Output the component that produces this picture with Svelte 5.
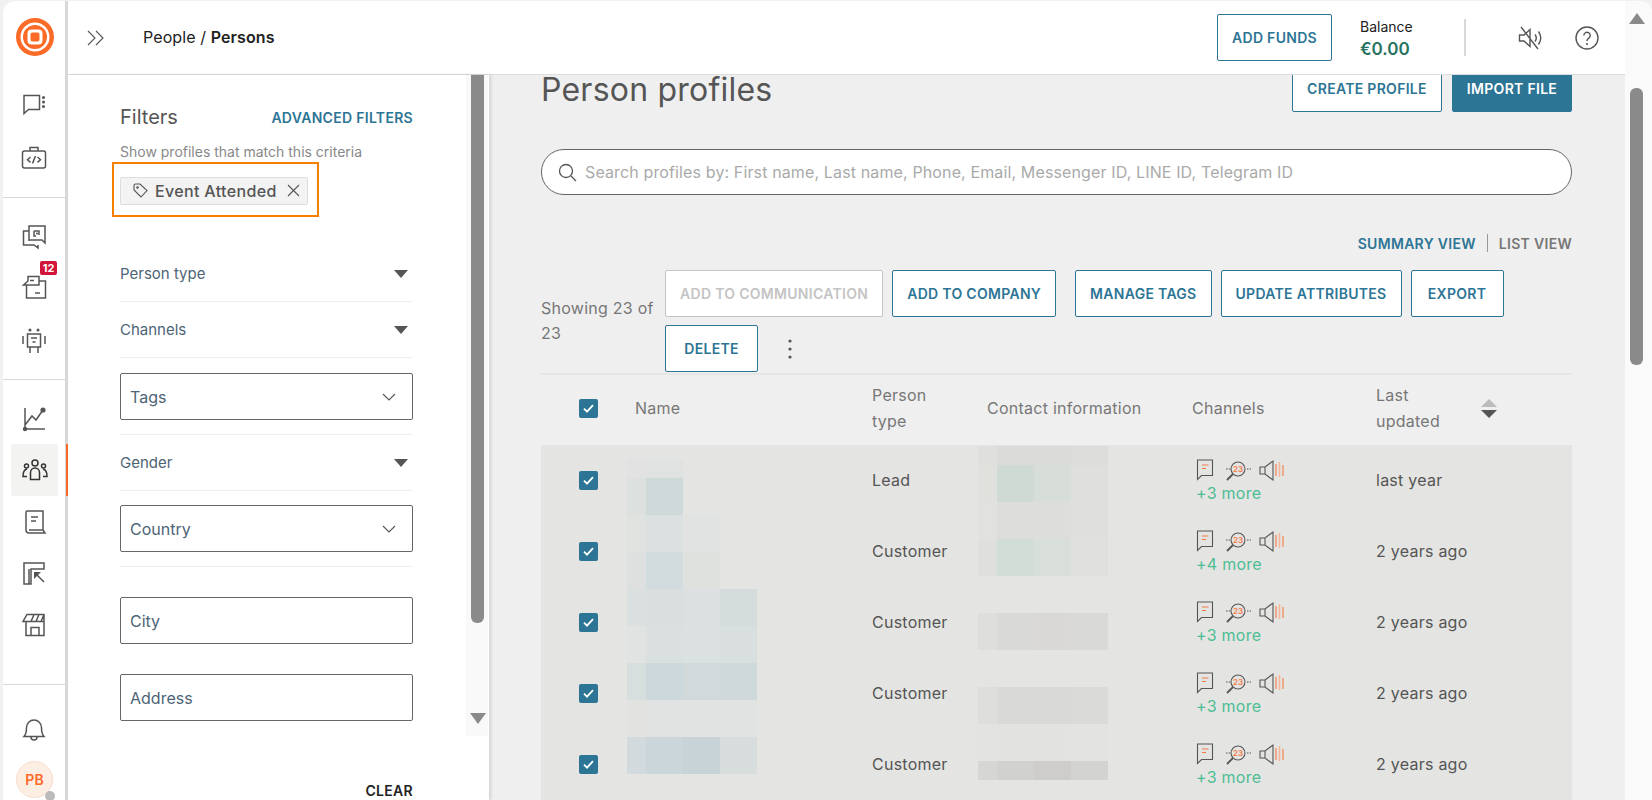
<script>
  const rows = [
    { type: 'Lead', more: 3, updated: 'last year' },
    { type: 'Customer', more: 4, updated: '2 years ago' },
    { type: 'Customer', more: 3, updated: '2 years ago' },
    { type: 'Customer', more: 3, updated: '2 years ago' },
    { type: 'Customer', more: 3, updated: '2 years ago' }
  ]

  const actions = ['ADD TO COMPANY', 'MANAGE TAGS', 'UPDATE ATTRIBUTES', 'EXPORT', 'DELETE']

  // redacted cells in the reference: column edges, then row top/height and fills
  const nameCols = [0, 19, 56, 93, 130]
  const nameBlocks = [
    [0, 19, ['#e1e2e1', '#dfe2e1']],
    [19, 37, ['#dce0df', '#cfd9da']],
    [56, 37, ['#dfe2de', '#dbe0e0', '#e0e3e2']],
    [93, 37, ['#dde0df', '#d2dbdd', '#dfe1df']],
    [130, 37, ['#dadfdf', '#d8dfde', '#dce0e0', '#d5dcdc']],
    [167, 37, ['#e0e3e2', '#dae0e0', '#dbe0e0', '#d9dfdf']],
    [204, 37, ['#d6dede', '#ccd8db', '#d2d9db', '#cfd8da']],
    [241, 37, ['#e2e3e1', '#e0e3e2', '#e0e3e2', '#e0e3e2']],
    [278, 37, ['#d3dadd', '#cbd6da', '#c7d3d6', '#d6dddc']]
  ]
  const contactBlocks = [
    [0, 19, ['#dfdfdd', '#dbdbd9', '#dbdbd9', '#dcdcda']],
    [19, 37, ['#e0e1dc', '#d0dad5', '#d7ddd9', '#dfdfdd']],
    [56, 37, ['#e1e1df', '#dddddb', '#dddddb', '#dfdfdd']],
    [93, 37, ['#dfdfdd', '#d3ddd8', '#d8ded9', '#e0e0de']],
    [167, 37, ['#dededc', '#d9d9d7', '#d9d8d6', '#d9d9d7']],
    [241, 37, ['#dededc', '#d9d9d7', '#d9d9d7', '#dadad8']],
    [278, 37, ['#e3e3e1', '#e2e2e0', '#e2e2e0', '#e3e3e1']],
    [315, 19, ['#d6d6d4', '#d1d1cf', '#cecdcb', '#d3d3d1']]
  ]
</script>

{#snippet check()}
  <span class="check">
    <svg width="11" height="9" viewBox="0 0 11 9"><path d="M1 4.6l3 3 6-6.4" fill="none" stroke="#fff" stroke-width="1.8"/></svg>
  </span>
{/snippet}

{#snippet mosaic(cls, blocks)}
  <svg class="mosaic {cls}" width="130" height="355" viewBox="0 0 130 355">
    {#each blocks as [y, h, fills]}
      {#each fills as fill, i}
        <rect x={nameCols[i]} {y} width={nameCols[i + 1] - nameCols[i]} height={h} {fill} />
      {/each}
    {/each}
  </svg>
{/snippet}

<div class="shell">
  <nav class="rail">
    <div class="group first">
      <svg class="logo" width="38" height="38" viewBox="0 0 38 38">
        <circle cx="19" cy="19" r="19" fill="#fb6a26"/>
        <circle cx="19" cy="19" r="14.5" fill="#fff"/>
        <circle cx="19" cy="19" r="12" fill="#fb6a26"/>
        <rect x="11.5" y="11.5" width="15" height="15" rx="4" fill="#fff"/>
        <rect x="14.5" y="14.5" width="9" height="9" rx="2" fill="#fb6a26"/>
      </svg>
      <div class="nav-item">
        <svg viewBox="0 0 30 30"><path d="M5 6.5h15.5v14H9.5L5 24.5z"/><g class="solid"><circle cx="24.5" cy="8.5" r="1.5"/><circle cx="24.5" cy="13" r="1.5"/><circle cx="24.5" cy="17.5" r="1.5"/></g></svg>
      </div>
      <div class="nav-item">
        <svg viewBox="0 -1 30 30"><rect x="3.5" y="9" width="23" height="17" rx="2"/><path d="M11 9V5.5h8V9M11.5 15l-3 2.7 3 2.7M18.5 15l3 2.7-3 2.7M16.5 14l-3 7.4"/></svg>
      </div>
    </div>
    <div class="group second">
      <div class="nav-item">
        <svg viewBox="0 0 30 30"><path d="M10 10H4.5V24H15l4 3v-3M10 20V5h16v17l-3-3H10M15 10h5v4M15 10v5h2"/><circle class="solid" cx="18" cy="12.5" r="1.1"/></svg>
      </div>
      <div class="nav-item">
        <svg viewBox="0 0 30 30"><path d="M9 3.5h11V12H4.500L9 8zM7.500 12v13h19V8H20M11 7.500h4M16 20h5"/></svg>
        <span class="badge">12</span>
      </div>
      <div class="nav-item">
        <svg viewBox="0 0 30 30"><rect x="8.5" y="9" width="13" height="13"/><g class="solid"><circle cx="11" cy="5" r="1.5"/><circle cx="19" cy="5" r="1.5"/></g><path d="M4 11v8M26 11v8M11 22v6M19 22v6M12 13h6M13.5 17h3"/></svg>
      </div>
    </div>
    <div class="group third">
      <div class="nav-item">
        <svg viewBox="0 0 30 30"><path d="M6 5v21h20M6 22l7-9 4 4 7-10"/><g class="solid"><circle cx="6" cy="26" r="2.2"/><circle cx="24" cy="7" r="2.6"/></g></svg>
      </div>
      <div class="nav-item active">
        <svg viewBox="0 0 30 30"><circle cx="15" cy="8" r="3"/><path d="M10.5 24.5v-7a4.5 4.5 0 0 1 9 0v7zM7 14c-3 .5-4 3-4 7.5h4M23 14c3 .5 4 3 4 7.500h-4"/><circle cx="6.5" cy="11" r="2"/><circle cx="23.5" cy="11" r="2"/></svg>
      </div>
      <div class="nav-item">
        <svg viewBox="0 1 30 30"><path d="M7 24V6a1 1 0 0 1 1-1h16v19M7 24a3 3 0 0 0 3 3h16l-2-3H10M12 11h7M12 15h5"/></svg>
      </div>
      <div class="nav-item">
        <svg viewBox="0 1 30 30"><path d="M5 5h20v6H12v15H5zM10 11v15M16 15l9 9"/><path class="solid" d="M15 14h7l-7 7z"/></svg>
      </div>
      <div class="nav-item">
        <svg viewBox="0 1.5 30 30"><path d="M8 5h17v7H4zM7 12v14h18V5M12 26v-8h8v8M12 12l3-7M17 12l3-7M22 12l3-7"/></svg>
      </div>
    </div>
    <div class="group last">
      <div class="nav-item">
        <svg viewBox="0 0 30 30"><path d="M5 22.5c2-2 2.500-4 2.500-9a7.500 7.500 0 0 1 15 0c0 5 .5 7 2.500 9zM12 23a3 3 0 0 0 6 0"/></svg>
      </div>
      <div class="avatar">PB<span class="status"></span></div>
    </div>
  </nav>

  <div class="content">
    <header class="topbar">
      <svg class="expand" width="18" height="16" viewBox="0 0 18 16"><path d="M1 1l7 7-7 7M9 1l7 7-7 7" fill="none" stroke="#555" stroke-width="1.1"/></svg>
      <div class="crumb">People / <b>Persons</b></div>
      <button class="btn funds">ADD FUNDS</button>
      <div class="balance">
        <div>Balance</div>
        <div class="amount">€0.00</div>
      </div>
      <span class="top-sep"></span>
      <svg class="mute" width="26" height="26" viewBox="0 0 26 26" fill="none" stroke="#555" stroke-width="1.4"><path d="M1.5 10v6H6l6 5.500V4.500L6 10zM17 9.500c1.500 2 1.500 5 0 7M20.500 6.500c2.800 4 2.800 9 0 13M3 2l17 22"/></svg>
      <svg class="help" width="24" height="24" viewBox="0 0 24 24" fill="none" stroke="#555" stroke-width="1.4"><circle cx="12" cy="12" r="11"/><path d="M8.800 9.500a3.200 3.200 0 1 1 5 2.600c-1.200.8-1.800 1.400-1.800 2.900"/><circle cx="12" cy="18" r="1" fill="#555" stroke="none"/></svg>
    </header>

    <div class="below">
      <aside class="panel">
        <div class="filters">
          <div class="filters-head">
            <span class="filters-title">Filters</span>
            <span class="advanced">ADVANCED FILTERS</span>
          </div>
          <div class="hint">Show profiles that match this criteria</div>
          <div class="highlight">
            <span class="chip">
              <svg width="15" height="15" viewBox="0 0 15 15" fill="none" stroke="#555" stroke-width="1.1"><path d="M1 2.500A1.500 1.500 0 0 1 2.500 1H7l7 6.500L8 14 1 7z"/><circle cx="4.5" cy="4.5" r=".8"/></svg>
              Event Attended
              <svg class="chip-x" width="13" height="13" viewBox="0 0 13 13" stroke="#555" stroke-width="1.1"><path d="M1 1l11 11M12 1L1 12"/></svg>
            </span>
          </div>

          <div class="acc first-acc">Person type<span class="caret"></span></div>
          <div class="acc">Channels<span class="caret"></span></div>
          <div class="sel-row"><div class="field">Tags<svg width="14" height="8" viewBox="0 0 14 8" fill="none" stroke="#555" stroke-width="1.1"><path d="M1 1l6 6 6-6"/></svg></div></div>
          <div class="acc">Gender<span class="caret"></span></div>
          <div class="sel-row country"><div class="field">Country<svg width="14" height="8" viewBox="0 0 14 8" fill="none" stroke="#555" stroke-width="1.1"><path d="M1 1l6 6 6-6"/></svg></div></div>
          <div class="field city">City</div>
          <div class="field address">Address</div>
          <div class="clear">CLEAR</div>
        </div>
        <div class="panel-scroll">
          <div class="panel-thumb"></div>
          <span class="arrow-down"></span>
        </div>
      </aside>

      <main class="main">
        <div class="scrolled">
          <div class="page-head">
            <h1>Person profiles</h1>
            <div class="head-actions">
              <button class="btn">CREATE PROFILE</button>
              <button class="btn primary">IMPORT FILE</button>
            </div>
          </div>

          <div class="search">
            <svg width="19" height="19" viewBox="0 0 19 19" fill="none" stroke="#555" stroke-width="1.3"><circle cx="8" cy="8" r="6.5"/><path d="M13 13l5 5"/></svg>
            Search profiles by: First name, Last name, Phone, Email, Messenger ID, LINE ID, Telegram ID
          </div>

          <div class="views">
            <span class="view-on">SUMMARY VIEW</span>
            <span class="view-sep"></span>
            <span class="view-off">LIST VIEW</span>
          </div>

          <div class="toolbar">
            <div class="showing">Showing 23 of 23</div>
            <div class="tool-btns">
              <button class="btn disabled">ADD TO COMMUNICATION</button>
              {#each actions as label}
                <button class="btn" class:spaced={label === 'MANAGE TAGS'}>{label}</button>
              {/each}
              <svg class="kebab" width="4" height="20" viewBox="0 0 4 20" fill="#555"><circle cx="2" cy="2" r="1.6"/><circle cx="2" cy="10" r="1.6"/><circle cx="2" cy="18" r="1.6"/></svg>
            </div>
          </div>

          <div class="grid thead">
            <div class="c-check">{@render check()}</div>
            <div>Name</div>
            <div>Person type</div>
            <div>Contact information</div>
            <div>Channels</div>
            <div class="sorted">
              <span>Last updated</span>
              <span class="sort"><i class="up"></i><i class="down"></i></span>
            </div>
          </div>

          <div class="tbody">
            {#each rows as row}
              <div class="grid row">
                <div class="c-check">{@render check()}</div>
                <div></div>
                <div>{row.type}</div>
                <div></div>
                <div class="channels">
                  <div class="chan-icons">
                    <svg width="92" height="22" viewBox="0 0 92 22" fill="none" stroke="#555" stroke-width="1.1">
                      <path d="M1.500 1h15v15.500H5.500L1.500 20.500z"/>
                      <path d="M6 6h6.500M6 9.500h4" stroke="#f47a45"/>
                      <circle cx="42" cy="10" r="7"/>
                      <path d="M37 15l-6 6" stroke-width="1.8"/>
                      <path d="M30 10h4M51 10h4" stroke-dasharray="1.5 1.2"/>
                      <text x="42" y="12.800" text-anchor="middle" class="tiny">23</text>
                      <path d="M64 8h5l8-6v19l-8-6h-5zM69 8v7"/>
                      <path d="M80 5v12M87 6v11" stroke="#f47a45"/>
                      <path d="M83.500 3v15" stroke="#f9b493" stroke-width="1.5"/>
                    </svg>
                  </div>
                  <div class="more">+{row.more} more</div>
                </div>
                <div>{row.updated}</div>
              </div>
            {/each}
            {@render mosaic('m-name', nameBlocks)}
            {@render mosaic('m-contact', contactBlocks)}
          </div>
        </div>
      </main>
    </div>
  </div>

  <div class="page-scroll">
    <span class="arrow-up"></span>
    <div class="page-thumb"></div>
  </div>
</div>

<style>
  :global(body) {
    margin: 0;
    background: #f1f1f1;
    font-family: Inter, "Liberation Sans", sans-serif;
    overflow: hidden;
  }

  .shell {
    display: flex;
    height: 799px;
    width: 1649px;
    margin: 1px 0 0 3px;
    background: #fff;
    border-radius: 12px 12px 0 0;
    overflow: hidden;
  }

  /* left rail */
  .rail {
    flex: 0 0 62px;
    height: 799px;
    border-right: 3px solid #d8d8d8;
    display: flex;
    flex-direction: column;
  }
  .group {
    border-bottom: 1px solid #d8d8d8;
    box-sizing: border-box;
  }
  .group.first { height: 197px; padding-top: 17px; }
  .group.second { height: 182px; padding-top: 12px; }
  .group.third { height: 305px; padding-top: 12px; }
  .group.last { border: 0; padding-top: 18px; }
  .logo { display: block; margin: 0 auto 22px 13px; }
  .nav-item {
    position: relative;
    height: 52px;
    display: flex;
    align-items: center;
    justify-content: center;
    margin-left: -1px;
  }
  .nav-item svg {
    width: 30px;
    height: 30px;
    fill: none;
    stroke: #555;
    stroke-width: 1.5;
  }
  .nav-item .solid { fill: #555; stroke: none; }
  .nav-item.active {
    background: #f3f3f2;
    width: 47px;
    margin-left: 8px;
    border-radius: 2px;
  }
  .nav-item.active svg { stroke: #333; }
  .nav-item.active::after {
    content: '';
    position: absolute;
    left: 55px;
    top: 0;
    bottom: 0;
    width: 3px;
    background: #fb6a26;
  }
  .badge {
    position: absolute;
    top: -1px;
    left: 38px;
    width: 17px;
    height: 14px;
    background: #d0143a;
    border-radius: 2px;
    color: #fff;
    font-size: 11px;
    font-weight: 700;
    line-height: 14px;
    text-align: center;
  }
  .avatar {
    position: relative;
    box-sizing: border-box;
    width: 37px;
    height: 37px;
    margin: 6px 0 0 13px;
    border-radius: 50%;
    background: #fdeee4;
    border: 1px solid #f8dccb;
    color: #fb6a26;
    font-size: 14px;
    font-weight: 600;
    line-height: 35px;
    text-align: center;
  }
  .status {
    position: absolute;
    right: -3px;
    bottom: -4px;
    width: 10px;
    height: 10px;
    border-radius: 50%;
    background: #bbb;
  }

  .content {
    flex: 0 0 1557px;
    display: flex;
    flex-direction: column;
    min-width: 0;
  }

  /* top bar */
  .topbar {
    flex: 0 0 73px;
    display: flex;
    align-items: center;
    border-bottom: 1px solid #ddd;
    padding: 0 26px 0 19px;
    background: #fff;
    color: #222;
    font-size: 16px;
  }
  .crumb { margin: 0 0 2px 38px; letter-spacing: .1px; }
  .crumb b { font-weight: 600; }
  .btn {
    box-sizing: border-box;
    height: 47px;
    min-width: 93px;
    padding: 0 14px;
    background: #fff;
    border: 1px solid #2d7595;
    border-radius: 2px;
    color: #2d7595;
    font-family: inherit;
    font-size: 14px;
    font-weight: 600;
    letter-spacing: .3px;
    white-space: nowrap;
  }
  .btn.primary { background: #2d7595; color: #fff; }
  .btn.disabled { border-color: #c4c4c4; color: #c4c4c4; }
  .btn.spaced { margin-left: 10px; }
  .funds { margin-left: auto; width: 115px; padding: 0; }
  .balance {
    width: 104px;
    margin-left: 28px;
    margin-top: 3px;
    font-size: 14px;
    line-height: 20px;
  }
  .amount {
    color: #27735f;
    font-size: 17px;
    font-weight: 600;
    line-height: 24px;
  }
  .top-sep { width: 2px; height: 37px; background: #d8d8d8; }
  .mute { margin-left: 52px; }
  .help { margin-left: 31px; }

  .below {
    flex: 1;
    display: flex;
    min-height: 0;
    background: #efefef;
  }

  /* filters */
  .panel {
    flex: 0 0 421px;
    display: flex;
    background: #fff;
    box-shadow: 2px 0 3px rgba(0, 0, 0, .12);
    z-index: 1;
    overflow: hidden;
  }
  .filters {
    width: 293px;
    padding: 30px 53px 0 52px;
    color: #4d6476;
    font-size: 15px;
  }
  .filters-head {
    display: flex;
    justify-content: space-between;
    align-items: center;
    height: 24px;
  }
  .filters-title { color: #555; font-size: 20px; }
  .advanced { color: #2d7595; font-size: 14px; font-weight: 600; letter-spacing: .3px; }
  .hint { margin-top: 14px; color: #888; font-size: 14px; line-height: 18px; }
  .highlight {
    box-sizing: border-box;
    display: inline-flex;
    align-items: center;
    height: 55px;
    margin: 1px 0 0 -8px;
    padding: 2px 9px 0 6px;
    border: 2px solid #f77f00;
    vertical-align: top;
  }
  .chip {
    box-sizing: border-box;
    display: flex;
    align-items: center;
    height: 28px;
    padding: 0 7px 0 12px;
    background: #f3f3f3;
    border: 1px solid #ddd;
    border-radius: 2px;
    color: #555;
    font-size: 16px;
    font-weight: 500;
    gap: 7px;
    letter-spacing: .35px;
  }
  .chip-x { margin-left: 3px; }
  .acc {
    display: flex;
    justify-content: space-between;
    align-items: center;
    height: 55px;
    border-bottom: 1px solid #eee;
  }
  .first-acc { margin-top: 29px; }
  .caret {
    width: 0;
    height: 0;
    margin-right: 5px;
    border: 7px solid transparent;
    border-top: 8px solid #555;
    border-bottom: 0;
  }
  .sel-row { padding: 15px 0 14px; border-bottom: 1px solid #eee; }
  .sel-row.country { padding-top: 14px; }
  .field {
    box-sizing: border-box;
    display: flex;
    justify-content: space-between;
    align-items: center;
    height: 47px;
    padding: 0 16px 0 9px;
    border: 1px solid #666;
    border-radius: 2px;
    font-size: 16px;
  }
  .city { margin-top: 30px; }
  .address { margin-top: 30px; }
  .clear {
    margin-top: 62px;
    color: #222;
    font-size: 14px;
    font-weight: 600;
    line-height: 16px;
    letter-spacing: .3px;
    text-align: right;
  }
  .panel-scroll {
    position: relative;
    width: 22px;
    height: 661px;
    background: #f9f9f9;
  }
  .panel-thumb {
    width: 13px;
    height: 548px;
    margin-left: 5px;
    background: #8a8a8a;
    border-radius: 0 0 6px 6px;
  }
  .arrow-down {
    position: absolute;
    left: 4px;
    top: 638px;
    width: 0;
    height: 0;
    border: 8px solid transparent;
    border-top: 11px solid #8a8a8a;
    border-bottom: 0;
  }

  /* main */
  .main {
    flex: 1;
    min-width: 0;
    overflow: hidden;
    background: #efefef;
  }
  .scrolled {
    margin-top: -10px;
    padding: 0 53px 0 52px;
  }
  .page-head {
    display: flex;
    justify-content: space-between;
    align-items: center;
    height: 47px;
  }
  h1 {
    margin: 3px 0 0;
    color: #555;
    font-size: 32px;
    line-height: 28px;
    font-weight: 400;
    letter-spacing: .22px;
  }
  .head-actions { display: flex; gap: 10px; }
  .head-actions .btn { width: 150px; padding: 0; }
  .head-actions .primary { width: 120px; }
  .search {
    box-sizing: border-box;
    display: flex;
    align-items: center;
    gap: 8px;
    height: 46px;
    margin-top: 37px;
    padding-left: 16px;
    border: 1px solid #666;
    border-radius: 23px;
    background: #fff;
    color: #aaa;
    font-size: 16px;
    letter-spacing: .13px;
  }
  .views {
    display: flex;
    justify-content: flex-end;
    align-items: center;
    gap: 11px;
    height: 16px;
    margin-top: 40px;
    font-size: 14px;
    font-weight: 600;
    letter-spacing: .3px;
  }
  .view-on { color: #2d7595; }
  .view-off { color: #777; }
  .view-sep { width: 1px; height: 18px; background: #999; }
  .toolbar {
    display: flex;
    align-items: center;
    margin-top: 19px;
    padding-bottom: 1px;
    border-bottom: 2px solid #e6e6e6;
  }
  .showing {
    flex: 0 0 124px;
    color: #777;
    font-size: 16px;
    letter-spacing: .25px;
    line-height: 25px;
  }
  .tool-btns {
    flex: 1;
    display: flex;
    flex-wrap: wrap;
    align-items: center;
    gap: 8px 9px;
  }
  .kebab { margin-left: 21px; }

  /* table */
  .grid {
    display: grid;
    grid-template-columns: 94px 237px 115px 205px 184px 1fr;
    align-items: center;
    color: #555;
    font-size: 16px;
    letter-spacing: .25px;
    line-height: 26px;
  }
  .thead {
    box-sizing: border-box;
    height: 69.5px;
    padding-bottom: 3px;
    color: #777;
  }
  .thead > div:nth-child(3), .sorted > span:first-child { width: 80px; }
  .sorted { display: flex; align-items: center; }
  .sort {
    display: flex;
    flex-direction: column;
    gap: 3px;
    margin-left: 25px;
  }
  .sort i {
    width: 0;
    height: 0;
    border: 8px solid transparent;
  }
  .sort .up { border-top: 0; border-bottom-width: 8px; border-bottom-color: #bbb; }
  .sort .down { border-bottom: 0; border-top-width: 8px; border-top-color: #555; }
  .c-check { display: flex; justify-content: center; }
  .check {
    display: flex;
    align-items: center;
    justify-content: center;
    width: 19px;
    height: 19px;
    background: #2d7595;
    border-radius: 2px;
  }
  .tbody {
    position: relative;
    background: #e4e4e2;
    height: 400px;
  }
  .row { height: 71px; }
  .chan-icons { height: 22px; margin-top: 4px; }
  .chan-icons svg { display: block; margin-left: 4px; }
  .tiny { fill: #f47a45; stroke: none; font-size: 8px; font-weight: 600; letter-spacing: 0; }
  .more { color: #4dbd94; line-height: 25px; margin-left: 4px; }
  .mosaic { position: absolute; top: 0; }
  .m-name { left: 86px; top: 14px; }
  .m-contact { left: 437px; top: 1px; }

  /* page scrollbar */
  .page-scroll {
    flex: 1;
    position: relative;
    background: #fafafa;
  }
  .page-thumb {
    position: absolute;
    left: 5px;
    top: 87px;
    width: 13px;
    height: 277px;
    background: #8a8a8a;
    border-radius: 6px;
  }
  .arrow-up {
    position: absolute;
    left: 4px;
    top: 12px;
    width: 0;
    height: 0;
    border: 8px solid transparent;
    border-bottom: 11px solid #8a8a8a;
    border-top: 0;
  }
</style>
